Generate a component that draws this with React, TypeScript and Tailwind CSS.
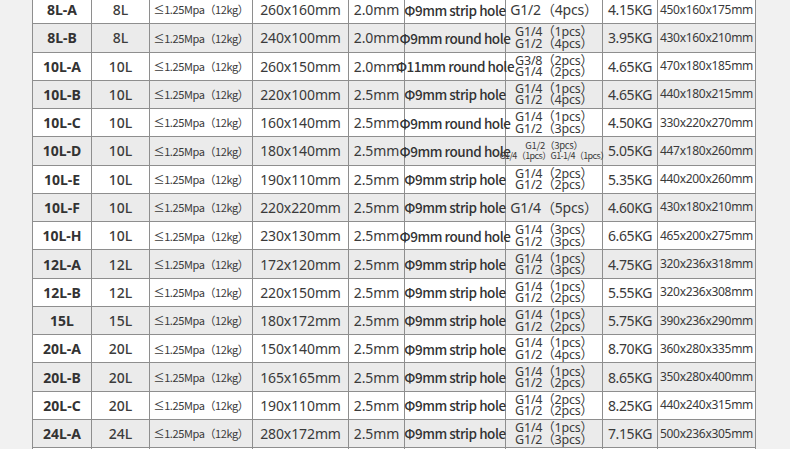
import React from "react";

type Row = {
  m: string;
  v: string;
  s: string;
  t: string;
  h: string;
  g: string[];
  g6?: boolean;
  w: string;
  d: string;
};

const rows: Row[] = [
  { m: "8L-A", v: "8L", s: "260x160mm", t: "2.0mm", h: "Φ9mm strip hole", g: ["G1/2（4pcs）"], w: "4.15KG", d: "450x160x175mm" },
  { m: "8L-B", v: "8L", s: "240x100mm", t: "2.0mm", h: "Φ9mm round hole", g: ["G1/4（1pcs）", "G1/2（4pcs）"], w: "3.95KG", d: "430x160x210mm" },
  { m: "10L-A", v: "10L", s: "260x150mm", t: "2.0mm", h: "Φ11mm round hole", g: ["G3/8（2pcs）", "G1/4（2pcs）"], w: "4.65KG", d: "470x180x185mm" },
  { m: "10L-B", v: "10L", s: "220x100mm", t: "2.5mm", h: "Φ9mm strip hole", g: ["G1/4（1pcs）", "G1/2（4pcs）"], w: "4.65KG", d: "440x180x215mm" },
  { m: "10L-C", v: "10L", s: "160x140mm", t: "2.5mm", h: "Φ9mm round hole", g: ["G1/4（1pcs）", "G1/2（3pcs）"], w: "4.50KG", d: "330x220x270mm" },
  { m: "10L-D", v: "10L", s: "180x140mm", t: "2.5mm", h: "Φ9mm round hole", g: ["G1/2（3pcs）", "G1/4（1pcs）G1-1/4（1pcs）"], g6: true, w: "5.05KG", d: "447x180x260mm" },
  { m: "10L-E", v: "10L", s: "190x110mm", t: "2.5mm", h: "Φ9mm strip hole", g: ["G1/4（2pcs）", "G1/2（2pcs）"], w: "5.35KG", d: "440x200x260mm" },
  { m: "10L-F", v: "10L", s: "220x220mm", t: "2.5mm", h: "Φ9mm strip hole", g: ["G1/4（5pcs）"], w: "4.60KG", d: "430x180x210mm" },
  { m: "10L-H", v: "10L", s: "230x130mm", t: "2.5mm", h: "Φ9mm round hole", g: ["G1/4（3pcs）", "G1/2（3pcs）"], w: "6.65KG", d: "465x200x275mm" },
  { m: "12L-A", v: "12L", s: "172x120mm", t: "2.5mm", h: "Φ9mm strip hole", g: ["G1/4（1pcs）", "G1/2（3pcs）"], w: "4.75KG", d: "320x236x318mm" },
  { m: "12L-B", v: "12L", s: "220x150mm", t: "2.5mm", h: "Φ9mm strip hole", g: ["G1/4（1pcs）", "G1/2（2pcs）"], w: "5.55KG", d: "320x236x308mm" },
  { m: "15L", v: "15L", s: "180x172mm", t: "2.5mm", h: "Φ9mm strip hole", g: ["G1/4（1pcs）", "G1/2（2pcs）"], w: "5.75KG", d: "390x236x290mm" },
  { m: "20L-A", v: "20L", s: "150x140mm", t: "2.5mm", h: "Φ9mm strip hole", g: ["G1/4（1pcs）", "G1/2（4pcs）"], w: "8.70KG", d: "360x280x335mm" },
  { m: "20L-B", v: "20L", s: "165x165mm", t: "2.5mm", h: "Φ9mm strip hole", g: ["G1/4（1pcs）", "G1/2（2pcs）"], w: "8.65KG", d: "350x280x400mm" },
  { m: "20L-C", v: "20L", s: "190x110mm", t: "2.5mm", h: "Φ9mm strip hole", g: ["G1/4（2pcs）", "G1/2（2pcs）"], w: "8.25KG", d: "440x240x315mm" },
  { m: "24L-A", v: "24L", s: "280x172mm", t: "2.5mm", h: "Φ9mm strip hole", g: ["G1/4（1pcs）", "G1/2（3pcs）"], w: "7.15KG", d: "500x236x305mm" },
];

const cell = "h-full flex items-center justify-center border-r border-[#8e8e8e] whitespace-nowrap";
const noto = "font-['Noto_Sans','Noto_Sans_CJK_KR',sans-serif]";
const cjk = "font-['Noto_Sans_CJK_KR','Noto_Sans',sans-serif]";

function GCell({ r }: { r: Row }) {
  if (r.g6) {
    return (
      <div className={`${cell} w-[97px] flex-col ${cjk} text-[#3a3a3a]`}>
        <span className="text-[9.5px] leading-[11px] tracking-[-0.3px]">{r.g[0]}</span>
        <span className="text-[9px] leading-[10px] tracking-[-0.6px]">{r.g[1]}</span>
      </div>
    );
  }
  if (r.g.length === 1) {
    return (
      <div className={`${cell} w-[97px] ${noto} text-[14px] text-[#3a3a3a] tracking-[-0.2px]`}>
        {r.g[0]}
      </div>
    );
  }
  return (
    <div className={`${cell} w-[97px] flex-col ${noto} text-[12.5px] text-[#3a3a3a] tracking-[-0.2px]`}>
      <span className="leading-[11.5px]">{r.g[0]}</span>
      <span className="leading-[11.5px]">{r.g[1]}</span>
    </div>
  );
}

function TableRow({ r, i }: { r: Row; i: number }) {
  const bg = i % 2 === 0 ? "bg-white" : "bg-[#ebebeb]";
  return (
    <div className={`flex h-[28.27px] border-b border-[#8e8e8e] ${bg}`}>
      <div className={`${cell} w-[59px] ${noto} font-bold text-[14px] text-[#333]`}>{r.m}</div>
      <div className={`${cell} w-[58px] ${noto} font-medium text-[14px] text-[#3c3c3c]`}>{r.v}</div>
      <div className={`${cell} w-[103px] ${cjk} text-[11px] tracking-[-0.4px] text-[#3a3a3a]`}>≤1.25Mpa（12kg）</div>
      <div className={`${cell} w-[96px] ${noto} text-[14px] text-[#3a3a3a] tracking-[-0.1px]`}>{r.s}</div>
      <div className={`${cell} w-[56px] ${noto} text-[14px] text-[#3a3a3a] tracking-[-0.1px]`}>{r.t}</div>
      <div className={`${cell} w-[101px] ${cjk} font-medium text-[13.5px] tracking-[-0.45px] text-[#333]`}>{r.h}</div>
      <GCell r={r} />
      <div className={`${cell} w-[55px] ${noto} text-[14px] tracking-[-0.4px] text-[#3a3a3a]`}>{r.w}</div>
      <div className={`${cell} w-[98px] ${noto} text-[12px] tracking-[-0.3px] text-[#3a3a3a]`}>{r.d}</div>
    </div>
  );
}

export default function App() {
  return (
    <div className="w-[790px] h-[449px] overflow-hidden bg-[#f1f1f1]">
      <div className="ml-[32px] w-[724px] -mt-[4px] border-l border-[#8e8e8e]">
        {rows.map((r, i) => (
          <TableRow key={r.m} r={r} i={i} />
        ))}
        <div className="flex h-[28px] bg-white">
          <div className={`${cell} w-[59px]`} />
          <div className={`${cell} w-[58px]`} />
          <div className={`${cell} w-[103px]`} />
          <div className={`${cell} w-[96px]`} />
          <div className={`${cell} w-[56px]`} />
          <div className={`${cell} w-[101px]`} />
          <div className={`${cell} w-[97px]`} />
          <div className={`${cell} w-[55px]`} />
          <div className={`${cell} w-[98px]`} />
        </div>
      </div>
    </div>
  );
}
